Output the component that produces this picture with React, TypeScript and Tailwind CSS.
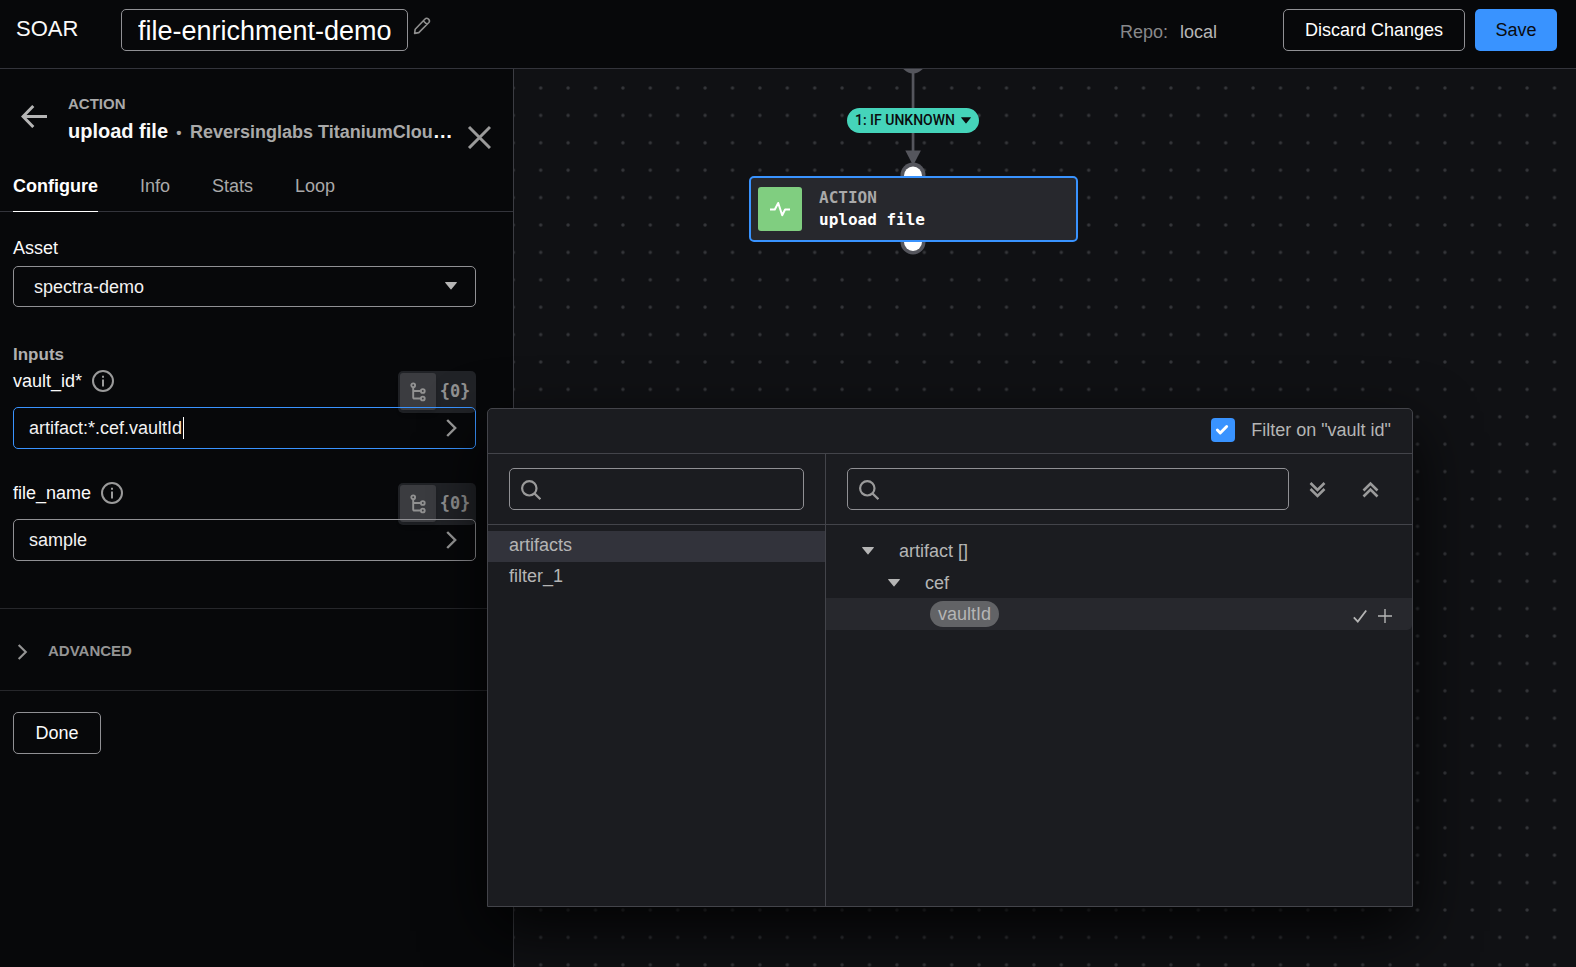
import React, { useState } from "react";
import { Check } from "lucide-react";
import clsx from "clsx";

const TABS = ["Configure", "Info", "Stats", "Loop"];
const SOURCES = ["artifacts", "filter_1"];

function Caret({ className }: { className?: string }) {
  return (
    <svg viewBox="0 0 12 8" className={clsx("w-3 h-2 fill-current", className)}>
      <path d="M0.6 0h10.8a.5.5 0 0 1 .4.8L6.4 7.3a.5.5 0 0 1-.8 0L.2.8A.5.5 0 0 1 .6 0z" />
    </svg>
  );
}

function ChevronRight({ className }: { className?: string }) {
  return (
    <svg viewBox="0 0 11 18" fill="none" stroke="currentColor" strokeWidth="2.4" className={className}>
      <path d="M1.2 1l8 8-8 8" />
    </svg>
  );
}

function InfoIcon() {
  return (
    <svg viewBox="0 0 22 22" fill="none" stroke="currentColor" strokeWidth="2" className="w-[22px] h-[22px] text-[#9a9a9a]">
      <circle cx="11" cy="11" r="10" />
      <path d="M11 9.5v7M11 5.8v2" />
    </svg>
  );
}

function TreeIcon() {
  return (
    <svg viewBox="0 0 16 20" fill="none" stroke="currentColor" strokeWidth="1.9" className="w-4 h-5">
      <circle cx="3.2" cy="3.3" r="1.9" />
      <circle cx="12.8" cy="9" r="1.9" />
      <circle cx="12.8" cy="16.5" r="1.9" />
      <path d="M3.2 5.3v10.2a1 1 0 0 0 1 1h6.6M3.2 9h7.6" />
    </svg>
  );
}

function SearchBox({ label }: { label: string }) {
  return (
    <div className="relative flex-1 min-w-0">
      <svg viewBox="0 0 20 20" fill="none" stroke="currentColor" strokeWidth="2.2" className="absolute left-3 top-3 w-5 h-5 text-[#9a9a9a]">
        <circle cx="8.3" cy="8.3" r="7.2" />
        <path d="M13.4 13.4l6 5.8" />
      </svg>
      <input
        type="text"
        aria-label={label}
        className="block w-full h-[42px] pl-10 pr-3 rounded-[5px] border border-[#909094] bg-transparent text-[18px] text-[#fafafa] outline-none"
      />
    </div>
  );
}

function Field({ id, label, value, active }: { id: string; label: string; value: string; active?: boolean }) {
  return (
    <div className="relative">
      <div className="flex items-center gap-[10px] h-6">
        <label htmlFor={id} className="text-[18px] leading-6 text-[#fafafa]">{label}</label>
        <InfoIcon />
      </div>

      {/* Picker mode toggle, tucked behind the input */}
      <div className="absolute right-0 top-0.5 flex w-[78px] h-[42px] p-0.5 rounded-[5px] bg-[#212327] text-[#929292]">
        <button aria-label="Datapath picker" className="flex items-center justify-center w-9 h-[37px] rounded-[3px] bg-[#3b3c40] shadow-md">
          <TreeIcon />
        </button>
        <button aria-label="Custom expression" className="flex flex-1 items-center justify-center h-[37px] font-['DejaVu_Sans_Mono',monospace] font-bold text-[17px]">
          {"{0}"}
        </button>
      </div>

      <div className="relative mt-[14px]">
        <input
          id={id}
          type="text"
          defaultValue={value}
          className={clsx(
            "block w-full h-[42px] pl-[15px] pr-12 rounded-[5px] border bg-transparent text-[18px] text-[#f2f2f2] outline-none",
            active ? "border-[#3993ff]" : "border-[#909094]"
          )}
        />
        {active && <span className="absolute left-[170px] top-[10px] w-px h-[22px] bg-white" />}
        <ChevronRight className="absolute right-[19px] top-3 w-[11px] h-[18px] text-[#9a9a9a]" />
      </div>
    </div>
  );
}

function Header() {
  return (
    <header className="flex items-center h-[69px] pl-4 pr-[19px] pb-2 border-b border-[#33343b] bg-[#07080a]">
      <h1 className="w-[105px] pb-1 text-[22px] font-medium text-[#fafafa]">SOAR</h1>
      <input
        type="text"
        aria-label="Playbook name"
        defaultValue="file-enrichment-demo"
        className="w-[287px] h-[42px] px-4 pt-0.5 rounded-[5px] border border-[#909094] bg-transparent text-[27px] text-white outline-none"
      />
      <button aria-label="Edit name" className="ml-[5px] mb-2 text-[#8f8f8f]">
        <svg viewBox="0 0 18 18" fill="none" stroke="currentColor" strokeWidth="1.6" strokeLinejoin="round" className="w-[18px] h-[18px]">
          <path d="M1.6 16.4l.6-4.2L11.8 2.2a2.5 2.5 0 0 1 3.8 3.6L5.8 15.6zM10.4 4l3.6 3.4" />
        </svg>
      </button>
      <div className="flex gap-3 ml-auto mr-[66px] pt-1 text-[18px]">
        <span className="text-[#87888a]">Repo:</span>
        <span className="text-[#b5b5b5]">local</span>
      </div>
      <button className="w-[182px] h-[42px] rounded-[5px] border border-[#909094] text-[18px] text-white">Discard Changes</button>
      <button className="w-[82px] h-[42px] ml-[10px] rounded-[5px] bg-[#3993ff] text-[18px] text-[#0b0c0e]">Save</button>
    </header>
  );
}

function Sidebar() {
  const [tab, setTab] = useState("Configure");

  return (
    <aside className="w-[514px] shrink-0 border-r border-[#3c3d43] bg-[#07080a]">
      <div className="flex items-start pt-6 pl-[21px] pr-[22px]">
        <button aria-label="Back" className="mt-[11px] text-[#b5b5b5]">
          <svg viewBox="0 0 26 24" fill="none" stroke="currentColor" strokeWidth="3" className="w-[26px] h-6">
            <path d="M26 12.5H2.5M12.3 2L2 12.5 12.3 23" />
          </svg>
        </button>
        <div className="flex-1 min-w-0 ml-[21px] font-bold whitespace-nowrap">
          <div className="text-[15px] leading-[22px] text-[#a9a9a9]">ACTION</div>
          <div className="flex items-baseline text-[20px] leading-8 text-[#fafafa]">
            <span>upload file</span>
            <span className="w-[22px] text-center text-[15px] text-[#a9a9a9]">•</span>
            <span className="text-[18px] text-[#a9a9a9]">Reversinglabs TitaniumClou</span>
            <span>…</span>
          </div>
        </div>
        <button aria-label="Close" className="mt-8 text-[#9a9a9a]">
          <svg viewBox="0 0 24 24" fill="none" stroke="currentColor" strokeWidth="3" className="w-6 h-6">
            <path d="M2 2l21 21M23 2L2 23" />
          </svg>
        </button>
      </div>

      <nav className="flex gap-[42px] mt-[25px] pl-[13px] border-b border-[#33343b]">
        {TABS.map((t) => (
          <button
            key={t}
            onClick={() => setTab(t)}
            className={clsx(
              "-mb-px pb-[13px] border-b text-[18px] leading-6",
              t === tab ? "border-white font-bold text-white" : "border-transparent text-[#a9a9a9]"
            )}
          >
            {t}
          </button>
        ))}
      </nav>

      <div className="pt-6 pl-[13px] pr-[37px]">
        <label htmlFor="asset" className="block text-[18px] leading-6 text-[#fafafa]">Asset</label>
        <div className="relative mt-[6px]">
          <select id="asset" className="block w-full h-[41px] pl-5 pt-0.5 rounded-[5px] border border-[#909094] bg-transparent appearance-none text-[18px] text-[#f2f2f2] outline-none">
            <option>spectra-demo</option>
          </select>
          <Caret className="absolute right-[19px] top-4 text-[#b5b5b5]" />
        </div>

        <h2 className="mt-9 text-[17px] leading-6 font-bold text-[#b0b0b0]">Inputs</h2>
        <div className="flex flex-col gap-8 mt-0.5">
          <Field id="vault_id" label="vault_id*" value="artifact:*.cef.vaultId" active />
          <Field id="file_name" label="file_name" value="sample" />
        </div>
      </div>

      <button className="flex items-center gap-[20px] w-full h-[83px] pt-1 mt-[47px] pl-[17px] border-y border-[#26272b] text-[15px] font-bold text-[#949494]">
        <ChevronRight className="w-[11px] h-4" />
        ADVANCED
      </button>

      <button className="w-[88px] h-[42px] mt-[21px] ml-[13px] rounded-[5px] border border-[#909094] text-[18px] text-[#fafafa]">Done</button>
    </aside>
  );
}

function Canvas() {
  return (
    <main className="relative flex-1 min-w-0 overflow-hidden bg-[#101114]">
      <svg className="absolute inset-0 w-full h-full">
        <defs>
          <pattern id="dots" x="-14.4" y="5.3" width="27.4" height="27.4" patternUnits="userSpaceOnUse">
            <circle cx="13.7" cy="13.7" r="1.7" fill="#35363a" />
          </pattern>
        </defs>
        <rect width="100%" height="100%" fill="url(#dots)" />
        {/* Edge from the upstream filter block */}
        <g fill="#55565d">
          <circle cx="399" cy="-8" r="12.5" />
          <rect x="397.7" y="0" width="2.7" height="86" />
          <path d="M391.3 81.5h15.6l-7.8 15z" />
          <circle cx="399" cy="106" r="12.5" />
          <circle cx="399" cy="173" r="12.5" />
        </g>
        <circle cx="399" cy="106.5" r="9" fill="#fff" />
        <circle cx="399" cy="173" r="9" fill="#fff" />
      </svg>

      <button className="absolute left-[333px] top-[39px] flex items-center justify-center gap-[6px] w-[132px] h-[25px] rounded-full bg-[#45d4ba] font-[Roboto,sans-serif] text-[14px] font-medium text-[#0b0c0e]">
        1: IF UNKNOWN
        <Caret className="w-[10px] h-[7px]" />
      </button>

      <div className="absolute left-[235px] top-[107px] flex items-center gap-[17px] w-[329px] h-[66px] pl-[7px] rounded-[5px] border-2 border-[#3993ff] bg-[#27282d]">
        <div className="flex items-center justify-center w-11 h-11 rounded-[3px] bg-[#80ce80]">
          <svg viewBox="0 0 22 16" fill="none" stroke="#fff" strokeWidth="2" strokeLinejoin="round" className="w-[22px] h-4">
            <path d="M1 8.5h4.8L9.2 2l4 12.3 2.9-5.8H21" />
          </svg>
        </div>
        <div className="font-['DejaVu_Sans_Mono',monospace] text-[16px] leading-[22px] font-bold">
          <div className="text-[#a9a9a9]">ACTION</div>
          <div className="text-white">upload file</div>
        </div>
      </div>
    </main>
  );
}

function DatapathPicker() {
  const [source, setSource] = useState("artifacts");

  return (
    <section className="absolute left-[487px] top-[339px] flex flex-col w-[926px] h-[499px] rounded-t-[5px] border border-[#43444a] bg-[#1b1c20] text-[18px] text-[#b5b5b5] shadow-[0_24px_64px_rgba(0,0,0,0.85)]">
      <div className="flex items-center justify-end h-[45px] pr-[21px] pb-0.5 border-b border-[#43444a]">
        <label className="flex items-center gap-4 cursor-pointer">
          <span className="relative w-6 h-6">
            <input type="checkbox" defaultChecked className="block w-6 h-6 rounded-[4px] bg-[#3993ff] appearance-none" />
            <Check strokeWidth={5} className="absolute left-1 top-1 w-[14px] h-4 text-white pointer-events-none" />
          </span>
          Filter on "vault id"
        </label>
      </div>

      <div className="flex flex-1">
        <div className="w-[338px] border-r border-[#43444a]">
          <div className="flex items-center h-[71px] px-[21px] border-b border-[#43444a]">
            <SearchBox label="Search sources" />
          </div>
          <div className="pt-[6px]">
            {SOURCES.map((s) => (
              <button
                key={s}
                onClick={() => setSource(s)}
                className={clsx("block w-full h-[31px] pl-[21px] pb-0.5 text-left", s === source && "bg-[#32333b]")}
              >
                {s}
              </button>
            ))}
          </div>
        </div>

        <div className="flex-1 min-w-0">
          <div className="flex items-center h-[71px] pl-[21px] pr-[30px] border-b border-[#43444a]">
            <SearchBox label="Search datapaths" />
            <div className="flex gap-[29px] ml-4 text-[#9a9a9a]">
              <button aria-label="Expand all">
                <svg viewBox="0 0 24 24" fill="none" stroke="currentColor" strokeWidth="2.6" className="w-6 h-6">
                  <path d="M5.5 6l7 7 7-7M5.5 12l7 7 7-7" />
                </svg>
              </button>
              <button aria-label="Collapse all">
                <svg viewBox="0 0 24 24" fill="none" stroke="currentColor" strokeWidth="2.6" className="w-6 h-6">
                  <path d="M5.5 13.5l7-7 7 7M5.5 19.5l7-7 7 7" />
                </svg>
              </button>
            </div>
          </div>

          <div className="pt-[9px]">
            <button className="flex items-center gap-[25px] w-full h-8 pl-9 pt-0.5">
              <Caret />
              artifact []
            </button>
            <button className="flex items-center gap-[25px] w-full h-8 pl-[62px] pt-0.5">
              <Caret />
              cef
            </button>
            <div className="flex items-center h-8 pl-[104px] pr-5 rounded-br-[5px] bg-[#27282d]">
              <button className="h-[26px] px-2 rounded-full bg-[#626366]">vaultId</button>
              <div className="flex gap-[11px] ml-auto pt-1">
                <button aria-label="Select vaultId">
                  <svg viewBox="0 0 14 14" fill="none" stroke="currentColor" strokeWidth="1.8" className="w-[14px] h-[14px]">
                    <path d="M.8 8.3l4 4.2L13.2 1.5" />
                  </svg>
                </button>
                <button aria-label="Add vaultId">
                  <svg viewBox="0 0 14 14" fill="none" stroke="currentColor" strokeWidth="1.4" className="w-[14px] h-[14px]">
                    <path d="M7 0v14M0 7h14" />
                  </svg>
                </button>
              </div>
            </div>
          </div>
        </div>
      </div>
    </section>
  );
}

export default function App() {
  return (
    <div className="flex flex-col min-h-screen bg-[#07080a] font-['Liberation_Sans',Arial,sans-serif]">
      <Header />
      <div className="relative flex flex-1 overflow-hidden">
        <Sidebar />
        <Canvas />
        <DatapathPicker />
      </div>
    </div>
  );
}
